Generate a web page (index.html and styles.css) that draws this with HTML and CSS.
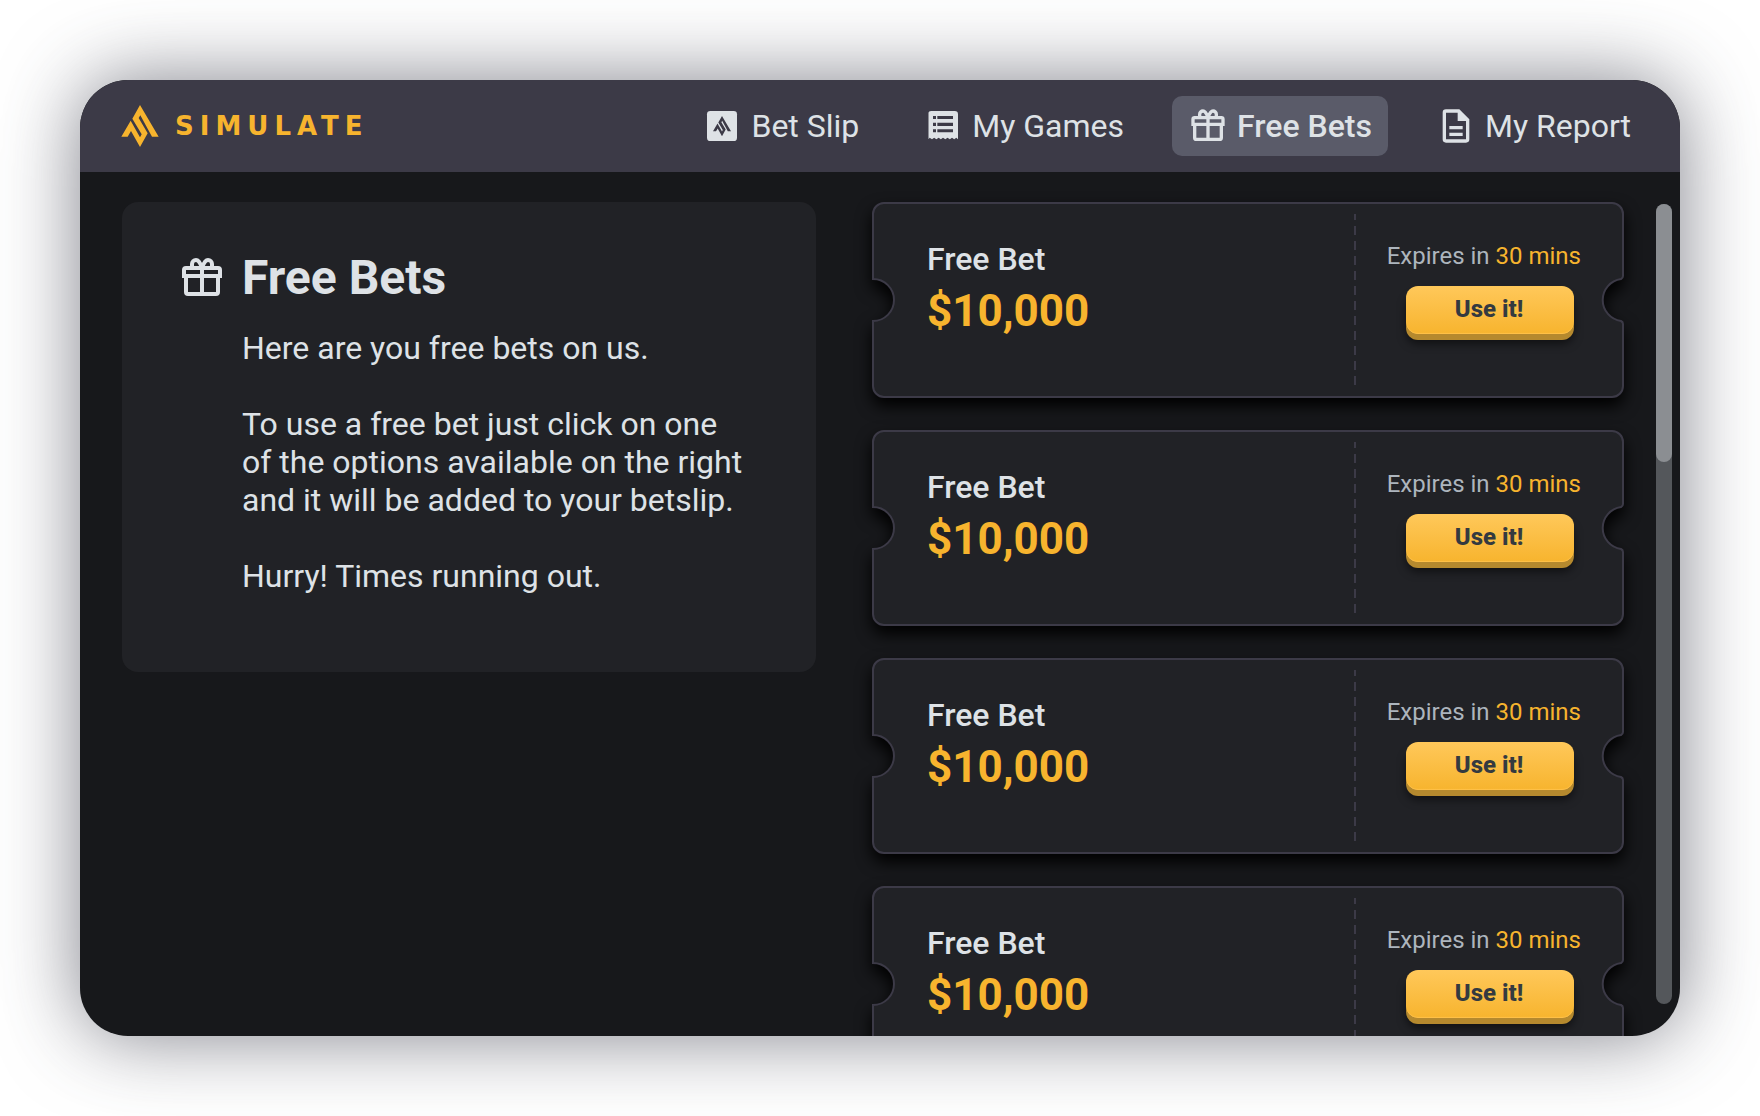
FILE: index.html
```html
<!DOCTYPE html>
<html lang="en">
<head>
<meta charset="utf-8">
<title>Simulate – Free Bets</title>
<link rel="stylesheet" href="styles.css">
</head>
<body>
<svg class="defs" aria-hidden="true">
  <symbol id="mark" viewBox="0 0 112 126">
    <path d="M56 0 112 95H92L57 31 52 39 79 85 56 126 29 78 19 95H0L28 47 56 97 61 88 33 41Z"/>
  </symbol>
  <symbol id="gift" viewBox="0 0 24 24">
    <g fill="none" stroke="currentColor" stroke-width="2">
      <path d="M4 11v8q0 1 1 1h14q1 0 1-1v-8M12 7v13"/>
      <path d="M3 11V8q0-1 1-1h16q1 0 1 1v3z"/>
      <path d="M12 7C11 4 10 3 9 3a2 2 0 0 0-2 2v2M12 7c1-3 2-4 3-4a2 2 0 0 1 2 2v2"/>
    </g>
  </symbol>
  <symbol id="slip" viewBox="0 0 24 24">
    <path d="M5 3h14q2 0 2 2v14q0 2-2 2H5q-2 0-2-2V5q0-2 2-2z"/>
    <use class="slip-mark" href="#mark" x="6.6" y="5.9" width="10.8" height="12.2"/>
  </symbol>
  <symbol id="games" viewBox="0 0 24 24">
    <path fill-rule="evenodd" d="M5 3h14q2 0 2 2V20l-1-1-1.300 1-1.300-1-1.300 1-1.400-1-1.300 1-1.400-1-1.300 1-1.300-1-1.400 1-1.300-1-1.300 1-1.400-1-.7 1V5Q3 3 5 3zM6 6v1.800h1.800V6zM8.600 6v1.800H18V6zM6 10v2h1.800v-2zM8.600 10v2H18v-2zM6 13.900v1.900h1.800v-1.900zM8.600 13.900v1.900H18v-1.900z"/>
  </symbol>
  <symbol id="report" viewBox="0 0 24 24">
    <path fill-rule="evenodd" d="M6 2a2 2 0 0 0-2 2v16a2 2 0 0 0 2 2h12a2 2 0 0 0 2-2V8l-6-6zM6 4h7v5h5v11H6zM8 12v2h8v-2zM8 16v2h8v-2z"/>
  </symbol>
  <symbol id="edge-left" viewBox="0 0 40 196">
    <path class="ticket-fill" d="M40 1H12A11 11 0 0 0 1 12V77A21 21 0 0 1 1 119V184A11 11 0 0 0 12 195H40z"/>
    <path class="ticket-line" d="M40 1H12A11 11 0 0 0 1 12V77A21 21 0 0 1 1 119V184A11 11 0 0 0 12 195H40"/>
  </symbol>
  <symbol id="edge-right" viewBox="0 0 40 196">
    <path class="ticket-fill" d="M0 1H28A11 11 0 0 1 39 12V74Q39 76 37 77A21.200 21.200 0 0 0 37 119Q39 120 39 122V184A11 11 0 0 1 28 195H0z"/>
    <path class="ticket-line" d="M0 1H28A11 11 0 0 1 39 12V74Q39 76 37 77A21.200 21.200 0 0 0 37 119Q39 120 39 122V184A11 11 0 0 1 28 195H0"/>
  </symbol>
</svg>

<div class="window">
  <header class="topbar">
    <a class="brand" href="#"><svg class="brand-mark"><use href="#mark"/></svg><span class="brand-name">SIMULATE</span></a>
    <nav class="nav">
      <a class="nav-link" href="#"><svg class="nav-icon"><use href="#slip"/></svg>Bet Slip</a>
      <a class="nav-link" href="#"><svg class="nav-icon"><use href="#games"/></svg>My Games</a>
      <a class="nav-link active" href="#" aria-current="page"><svg class="nav-icon"><use href="#gift"/></svg>Free Bets</a>
      <a class="nav-link" href="#"><svg class="nav-icon"><use href="#report"/></svg>My Report</a>
    </nav>
  </header>

  <main class="content">
    <section class="intro">
      <svg class="intro-icon"><use href="#gift"/></svg>
      <div class="intro-text">
        <h1>Free Bets</h1>
        <p>Here are you free bets on us.</p>
        <p>To use a free bet just click on one of the options available on the right and it will be added to your betslip.</p>
        <p>Hurry! Times running out.</p>
      </div>
    </section>

    <ul class="tickets">
      <li class="ticket">
        <div class="ticket-shape"><svg class="edge"><use href="#edge-left"/></svg><div class="middle"></div><svg class="edge"><use href="#edge-right"/></svg></div>
        <div class="offer"><h2>Free Bet</h2><p class="amount">$10,000</p></div>
        <svg class="tear"><line x1="1" y1="0" x2="1" y2="100%"/></svg>
        <div class="claim"><p class="expiry">Expires in <span>30 mins</span></p><button class="use" type="button">Use it!</button></div>
      </li>
      <li class="ticket">
        <div class="ticket-shape"><svg class="edge"><use href="#edge-left"/></svg><div class="middle"></div><svg class="edge"><use href="#edge-right"/></svg></div>
        <div class="offer"><h2>Free Bet</h2><p class="amount">$10,000</p></div>
        <svg class="tear"><line x1="1" y1="0" x2="1" y2="100%"/></svg>
        <div class="claim"><p class="expiry">Expires in <span>30 mins</span></p><button class="use" type="button">Use it!</button></div>
      </li>
      <li class="ticket">
        <div class="ticket-shape"><svg class="edge"><use href="#edge-left"/></svg><div class="middle"></div><svg class="edge"><use href="#edge-right"/></svg></div>
        <div class="offer"><h2>Free Bet</h2><p class="amount">$10,000</p></div>
        <svg class="tear"><line x1="1" y1="0" x2="1" y2="100%"/></svg>
        <div class="claim"><p class="expiry">Expires in <span>30 mins</span></p><button class="use" type="button">Use it!</button></div>
      </li>
      <li class="ticket">
        <div class="ticket-shape"><svg class="edge"><use href="#edge-left"/></svg><div class="middle"></div><svg class="edge"><use href="#edge-right"/></svg></div>
        <div class="offer"><h2>Free Bet</h2><p class="amount">$10,000</p></div>
        <svg class="tear"><line x1="1" y1="0" x2="1" y2="100%"/></svg>
        <div class="claim"><p class="expiry">Expires in <span>30 mins</span></p><button class="use" type="button">Use it!</button></div>
      </li>
    </ul>

    <div class="rail"><div class="thumb"></div></div>
  </main>
</div>
</body>
</html>
```
FILE: styles.css
```css
* { box-sizing: border-box; }

body {
  margin: 0;
  padding: 80px;
  height: 100vh;
  overflow: hidden;
  background: #fff;
  color: #dee2e6;
  font-family: Roboto, "Liberation Sans", sans-serif;
}

h1, h2, p, ul { margin: 0; padding: 0; }

svg { display: block; fill: currentColor; }

.defs { position: absolute; width: 0; height: 0; }

.window {
  display: flex;
  flex-direction: column;
  height: 100%;
  border-radius: 48px;
  overflow: hidden;
  background: #17181b;
  box-shadow: 0 0 80px rgba(56, 58, 72, 0.64);
}

/* Top bar */
.topbar {
  display: flex;
  flex: none;
  align-items: center;
  justify-content: space-between;
  height: 92px;
  padding: 0 33px 0 41px;
  background: #3c3a47;
}

.brand {
  display: flex;
  align-items: center;
  gap: 16px;
  color: #f7b42e;
  text-decoration: none;
}

.brand-mark { width: 38px; height: 42px; }

.brand-name {
  font: bold 26px/32px "DejaVu Sans", sans-serif;
  letter-spacing: 6px;
}

.nav { display: flex; gap: 32px; }

.nav-link {
  display: flex;
  align-items: center;
  gap: 9px;
  height: 60px;
  padding: 0 16px;
  border-radius: 10px;
  color: #dee2e6;
  font-size: 32px;
  line-height: 38px;
  text-decoration: none;
  white-space: nowrap;
}

.nav-link.active { background: #5a5b69; font-weight: 500; }

.nav-icon { width: 40px; height: 40px; }

.slip-mark { fill: #3c3a47; }

/* Body */
.content {
  display: grid;
  grid-template-columns: minmax(0, 19fr) minmax(0, 23fr) 16px;
  grid-template-rows: minmax(0, 1fr);
  flex: 1;
  min-height: 0;
  padding: 0 8px 0 42px;
}

.intro {
  display: flex;
  align-self: start;
  gap: 16px;
  min-height: 470px;
  margin-top: 30px;
  padding: 48px 70px 56px 56px;
  border-radius: 16px;
  background: #212226;
}

.intro-icon { flex: none; width: 48px; height: 48px; margin-top: 4px; }

.intro-text { font-size: 32px; line-height: 38px; }

.intro h1 { margin-bottom: 23px; font-size: 48px; line-height: 56px; font-weight: 700; }

.intro p + p { margin-top: 38px; }

.tickets {
  display: flex;
  flex-direction: column;
  gap: 32px;
  padding: 30px 32px 30px 56px;
  overflow-y: auto;
  scrollbar-width: none;
  list-style: none;
}

.ticket {
  display: flex;
  position: relative;
  flex: none;
  height: 196px;
  padding: 12px 0 10px;
}

/* Ticket outline: notched ends joined by a stretching middle */
.ticket-shape {
  display: flex;
  position: absolute;
  inset: 0;
  filter: drop-shadow(0 8px 8px #000);
}

.edge { flex: none; width: 40px; height: 196px; }

.ticket-fill { fill: #212226; }

.ticket-line { fill: none; stroke: #3c3a47; stroke-width: 2; }

.middle {
  flex: 1;
  border: solid #3c3a47;
  border-width: 2px 0;
  background: #212226;
}

.offer { position: relative; flex: 1; padding: 26px 0 0 55px; }

.offer h2 { font-size: 32px; line-height: 38px; font-weight: 500; }

.amount { margin-top: 7px; color: #f7b42e; font-size: 44px; line-height: 52px; font-weight: 700; }

.tear {
  position: relative;
  width: 2px;
  height: 174px;
  stroke: #3c3a47;
  stroke-width: 2;
  stroke-dasharray: 9 6;
  stroke-dashoffset: 3;
}

.claim {
  display: flex;
  position: relative;
  flex-direction: column;
  align-items: flex-end;
  gap: 16px;
  width: 268px;
  padding: 28px 43px 0 0;
}

.expiry { color: #adb5bd; font-size: 24px; line-height: 28px; white-space: nowrap; }

.expiry span { color: #f7b42e; }

.use {
  width: 168px;
  height: 48px;
  margin-right: 7px;
  padding: 0 2px 2px 0;
  border: 0;
  border-radius: 12px;
  background: linear-gradient(#ffc85a, #f7b42e);
  box-shadow: inset 0 -1px 1px #ffc14a, 0 6px 0 #b5892e, 0 10px 8px rgba(0, 0, 0, 0.5);
  color: #343a40;
  font: 800 24px/28px Roboto, "Liberation Sans", sans-serif;
}

/* Scroll rail */
.rail {
  height: 800px;
  max-height: calc(100% - 64px);
  margin-top: 32px;
  border-radius: 8px;
  background: #54575b;
}

.thumb { height: 258px; border-radius: 8px; background: #8b8e92; }
```
